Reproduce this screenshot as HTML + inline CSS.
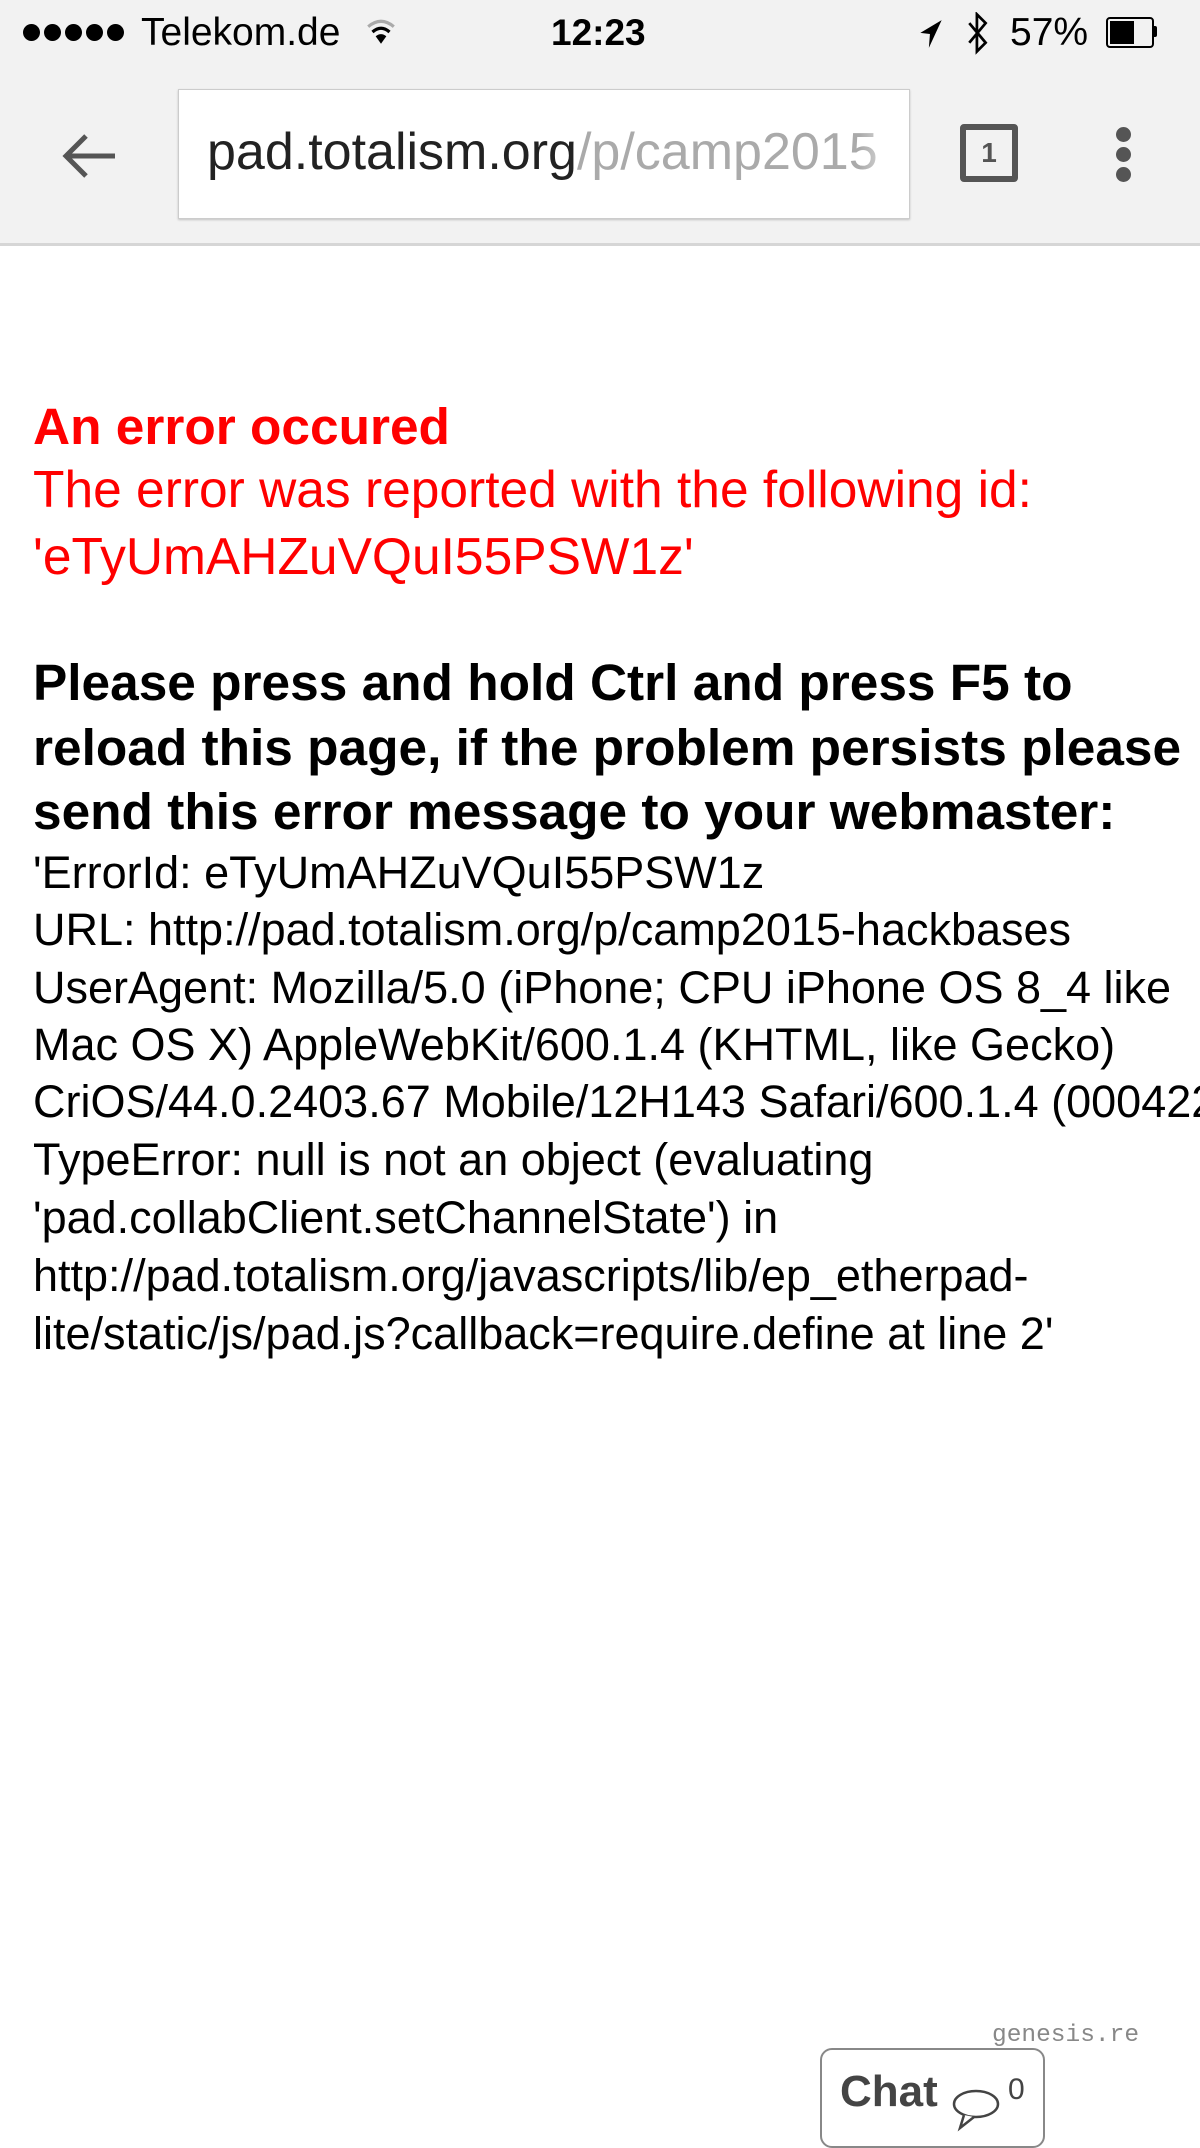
<!DOCTYPE html>
<html><head><meta charset="utf-8"><style>
html,body{margin:0;padding:0;width:1200px;height:2134px;overflow:hidden;background:#fff;font-family:"Liberation Sans",Arial,sans-serif;}
.a{position:absolute;white-space:nowrap;}
.top{position:absolute;left:0;top:0;width:1200px;height:243px;background:#f2f2f2;border-bottom:3px solid #d6d6d6;}
.l{position:absolute;left:33px;white-space:nowrap;line-height:60px;}
.red{color:#ff0000;}
.dot{position:absolute;top:24px;width:17px;height:17px;border-radius:50%;background:#000;}
</style></head><body>
<div class="top">
  <div class="dot" style="left:23px"></div><div class="dot" style="left:44px"></div><div class="dot" style="left:65px"></div><div class="dot" style="left:86px"></div><div class="dot" style="left:107px"></div>
  <div class="a" style="left:141px;top:11px;font-size:39px;line-height:44px;color:#000;">Telekom.de</div>
  <svg class="a" style="left:366px;top:16px" width="30" height="32" viewBox="0 0 28 30"><path d="M2 10 Q14 0 26 10" stroke="#aaa" stroke-width="3" fill="none"/><path d="M6 15 Q14 8 22 15" stroke="#000" stroke-width="3" fill="none"/><path d="M14 26 L9 19 Q14 15 19 19 Z" fill="#000"/></svg>
  <div class="a" style="left:551px;top:11px;font-size:37px;line-height:44px;font-weight:bold;">12:23</div>
  <svg class="a" style="left:918px;top:18px" width="26" height="32" viewBox="0 0 24 30"><path d="M22 2 L2 14 L11 15 L10 28 Z" fill="#000"/></svg>
  <svg class="a" style="left:966px;top:12px" width="24" height="44" viewBox="0 0 22 40"><path d="M3 10 L18 28 L10 36 L10 2 L18 10 L3 28" stroke="#000" stroke-width="2.5" fill="none"/></svg>
  <div class="a" style="left:1010px;top:11px;font-size:39px;line-height:44px;">57%</div>
  <div class="a" style="left:1106px;top:17px;width:44px;height:27px;border:2px solid #000;border-radius:4px;"><div style="margin:2px;width:24px;height:23px;background:#000"></div></div>
  <div class="a" style="left:1153px;top:26px;width:4px;height:11px;background:#000;border-radius:0 2px 2px 0"></div>
  <svg class="a" style="left:60px;top:126px" width="60" height="60" viewBox="0 0 60 60"><path d="M55 30 H8 M26 10 L6 30 L26 50" stroke="#555" stroke-width="5" fill="none"/></svg>
  <div class="a" style="left:178px;top:89px;width:730px;height:128px;background:#fff;border:1px solid #ccc;box-shadow:0 1px 2px rgba(0,0,0,.2);overflow:hidden;">
    <div class="a" style="left:28px;top:31px;font-size:52px;line-height:62px;color:#222;">pad.totalism.org<span style="color:#aaa">/p/camp2015</span></div>
    <div class="a" style="right:0;top:0;width:50px;height:128px;background:linear-gradient(to right,rgba(255,255,255,0),#fff)"></div>
  </div>
  <div class="a" style="left:960px;top:124px;width:58px;height:58px;border:6px solid #555;border-radius:4px;box-sizing:border-box;font-size:28px;line-height:46px;text-align:center;color:#555;font-weight:bold;">1</div>
  <div class="a" style="left:1116px;top:127px;width:15px;height:15px;border-radius:50%;background:#555"></div>
  <div class="a" style="left:1116px;top:147px;width:15px;height:15px;border-radius:50%;background:#555"></div>
  <div class="a" style="left:1116px;top:167px;width:15px;height:15px;border-radius:50%;background:#555"></div>
</div>

<div class="l red" style="top:396px;font-size:51.4px;font-weight:bold;">An error occured</div>
<div class="l red" style="top:459px;font-size:51.5px;">The error was reported with the following id:</div>
<div class="l red" style="top:526px;font-size:51.5px;">'eTyUmAHZuVQuI55PSW1z'</div>
<div class="l" style="top:652px;font-size:51.4px;font-weight:bold;">Please press and hold Ctrl and press F5 to</div>
<div class="l" style="top:717px;font-size:51.4px;font-weight:bold;">reload this page, if the problem persists please</div>
<div class="l" style="top:781px;font-size:51.4px;font-weight:bold;">send this error message to your webmaster:</div>
<div class="l" style="top:843px;font-size:45px;">'ErrorId: eTyUmAHZuVQuI55PSW1z</div>
<div class="l" style="top:900px;font-size:45px;">URL: http://pad.totalism.org/p/camp2015-hackbases</div>
<div class="l" style="top:958px;font-size:45px;">UserAgent: Mozilla/5.0 (iPhone; CPU iPhone OS 8_4 like</div>
<div class="l" style="top:1015px;font-size:45px;">Mac OS X) AppleWebKit/600.1.4 (KHTML, like Gecko)</div>
<div class="l" style="top:1072px;font-size:45px;">CriOS/44.0.2403.67 Mobile/12H143 Safari/600.1.4 (000422)</div>
<div class="l" style="top:1130px;font-size:45px;">TypeError: null is not an object (evaluating</div>
<div class="l" style="top:1188px;font-size:45px;">'pad.collabClient.setChannelState') in</div>
<div class="l" style="top:1246px;font-size:45px;">http://pad.totalism.org/javascripts/lib/ep_etherpad-</div>
<div class="l" style="top:1304px;font-size:45px;">lite/static/js/pad.js?callback=require.define at line 2'</div>

<div class="a" style="left:992px;top:2021px;font-family:'Liberation Mono',monospace;font-size:24.5px;line-height:30px;color:#888;">genesis.re</div>
<div class="a" style="left:820px;top:2048px;width:225px;height:100px;border:2px solid #888;border-radius:12px;box-sizing:border-box;background:#fff;">
  <div class="a" style="left:18px;top:16px;font-size:44px;line-height:52px;font-weight:bold;color:#444;">Chat</div>
  <svg class="a" style="left:128px;top:38px" width="52" height="44" viewBox="0 0 52 44"><ellipse cx="26" cy="16" rx="22" ry="13" fill="none" stroke="#444" stroke-width="2.5"/><path d="M14 27 L10 40 L24 29" fill="#fff" stroke="#444" stroke-width="2.5"/></svg>
  <div class="a" style="left:186px;top:22px;font-size:30px;line-height:36px;color:#444;">0</div>
</div>
</body></html>
